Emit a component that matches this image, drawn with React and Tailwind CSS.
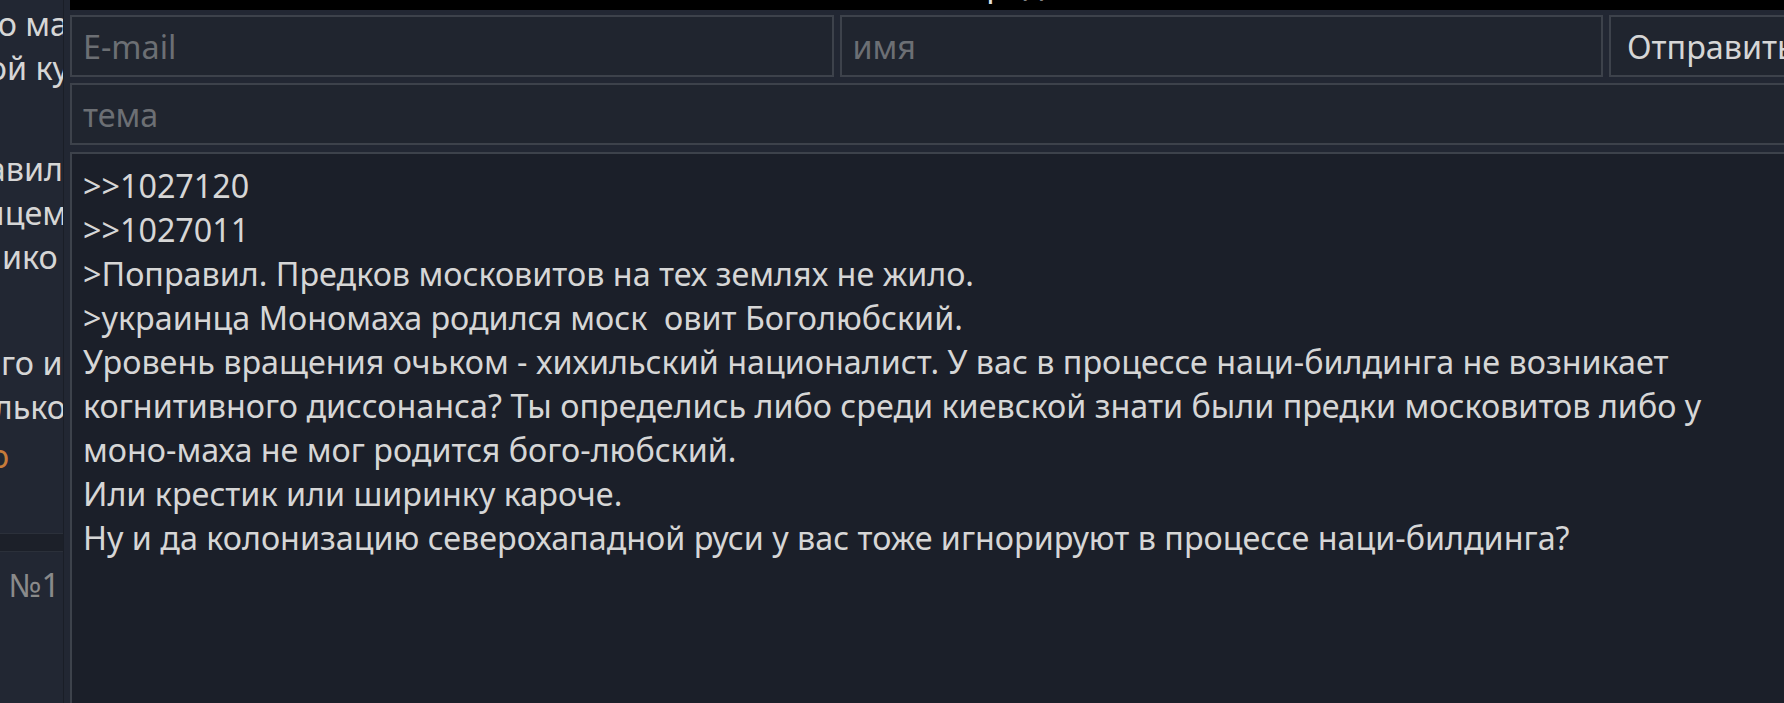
import React from "react";

const sideLines = [
  { text: "то ма", cls: "mt-[1px] justify-end -mr-[5px]" },
  { text: "ой ку", cls: "justify-end -mr-[6px]" },
  { text: "авил", cls: "mt-[57px] justify-end" },
  { text: "ицем", cls: "justify-end -mr-[4px]" },
  { text: "ико", cls: "justify-start pl-[2px]" },
  { text: "го и", cls: "mt-[62px] justify-start pl-[1px]" },
  { text: "лько", cls: "justify-end -mr-[3px]" },
];

const postLines = [
  ">>1027120",
  ">>1027011",
  ">Поправил. Предков московитов на тех землях не жило.",
  ">украинца Мономаха родился моск  овит Боголюбский.",
  "Уровень вращения очьком - хихильский националист. У вас в процессе наци-билдинга не возникает",
  "когнитивного диссонанса? Ты определись либо среди киевской знати были предки московитов либо у",
  "моно-маха не мог родится бого-любский.",
  "Или крестик или ширинку кароче.",
  "Ну и да колонизацию северохападной руси у вас тоже игнорируют в процессе наци-билдинга?",
];

const App = () => {
  return (
    <div className="w-[1784px] h-[703px] overflow-hidden flex bg-[#222733] text-[32.3px] leading-[44px] text-[#d6d6d6] font-['Noto_Sans',sans-serif]">
      {/* thread page peeking out from behind the form */}
      <aside className="w-[64px] shrink-0 border-r border-[#1a1e27] overflow-hidden flex flex-col">
        {sideLines.map((line, i) => (
          <div key={i} className={`shrink-0 flex whitespace-nowrap ${line.cls}`}>
            {line.text}
          </div>
        ))}
        <div className="shrink-0 mt-[5px] flex whitespace-nowrap text-[#c77b3a]">
          <span className="-ml-[10px]">о</span>
        </div>
        <div className="shrink-0 mt-[56px] h-[19px] border-y border-[#2b303a] bg-[#1c2029]" />
        <div className="shrink-0 mt-[10px] flex justify-end pr-[3px] text-[#8a8a8a]">№1</div>
      </aside>

      {/* reply form */}
      <div className="ml-[6px] w-[1754px] shrink-0 flex flex-col overflow-hidden">
        <div className="h-[10px] shrink-0 bg-black overflow-hidden">
          <div className="-mt-[39px] pl-[776px] whitespace-nowrap text-[#e0e0e0]">Ответ в тред</div>
        </div>

        <div className="mt-[5px] shrink-0 flex gap-[6px]">
          <input
            type="text"
            placeholder="E-mail"
            className="flex-1 min-w-0 h-[62px] px-[11px] border-2 border-[#3d424b] bg-[#20252f] outline-none placeholder:text-[#6c6f74]"
          />
          <input
            type="text"
            placeholder="имя"
            className="flex-1 min-w-0 h-[62px] px-[11px] border-2 border-[#3d424b] bg-[#20252f] outline-none placeholder:text-[#6c6f74]"
          />
          <button className="w-[215px] h-[62px] pl-[16px] text-left whitespace-nowrap overflow-hidden border-2 border-[#3d424b] bg-[#20252f] text-[#d6d6d6]">
            Отправить
          </button>
        </div>

        <input
          type="text"
          placeholder="тема"
          className="mt-[6px] h-[62px] shrink-0 px-[11px] border-2 border-[#3d424b] bg-[#20252f] outline-none placeholder:text-[#6c6f74]"
        />

        <div className="mt-[7px] h-[600px] shrink-0 border-2 border-[#3d424b] bg-[#1b1f29] pt-[9px] px-[11px]">
          {postLines.map((line, i) => (
            <div key={i} className="whitespace-pre">
              {line}
            </div>
          ))}
        </div>
      </div>
    </div>
  );
};

export default App;
